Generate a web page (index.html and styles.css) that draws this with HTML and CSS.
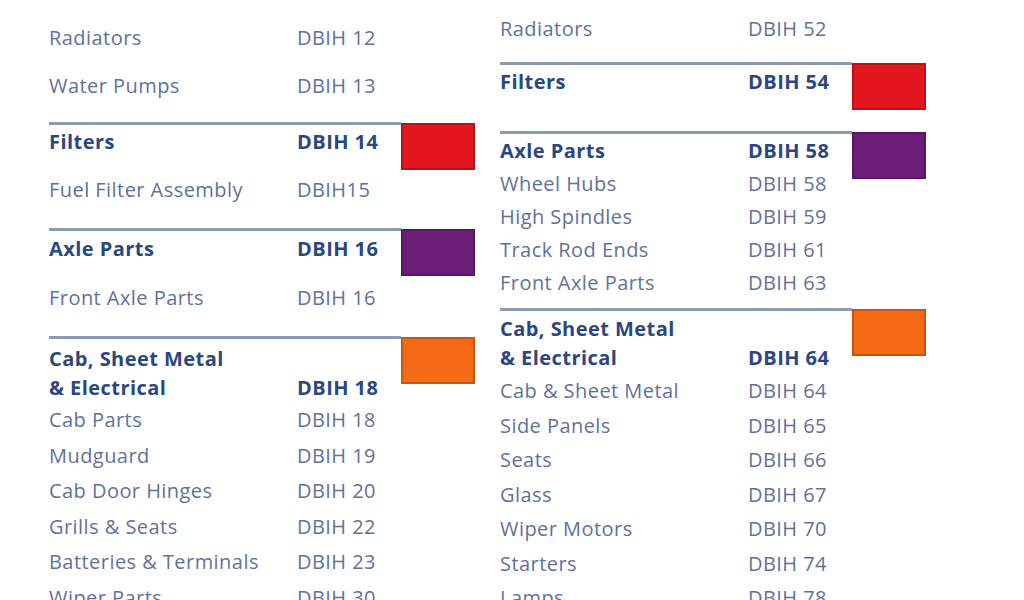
FILE: index.html
```html
<!DOCTYPE html>
<html>
<head>
<meta charset="utf-8">
<link rel="stylesheet" href="styles.css">
</head>
<body>
<div class="page">
  <div class="col col-left">
    <div class="row lead cut"><span class="name">Cooling Pipes</span><span class="code">DBIH 11</span></div>
    <div class="row lead"><span class="name">Radiators</span><span class="code">DBIH 12</span></div>
    <div class="row lead"><span class="name">Water Pumps</span><span class="code">DBIH 13</span></div>

    <div class="sec sec-l1">
      <div class="body">
        <div class="row head"><span class="name">Filters</span><span class="code">DBIH 14</span></div>
        <div class="row sub"><span class="name">Fuel Filter Assembly</span><span class="code">DBIH15</span></div>
      </div>
      <div class="swatch red"></div>
    </div>

    <div class="sec sec-l2">
      <div class="body">
        <div class="row head"><span class="name">Axle Parts</span><span class="code">DBIH 16</span></div>
        <div class="row sub sub2"><span class="name">Front Axle Parts</span><span class="code">DBIH 16</span></div>
      </div>
      <div class="swatch purple"></div>
    </div>

    <div class="sec sec-l3">
      <div class="body">
        <div class="head2">
          <div class="row head tall"><span class="name">Cab, Sheet Metal</span><span class="code"></span></div>
          <div class="row head tall"><span class="name">&amp; Electrical</span><span class="code">DBIH 18</span></div>
        </div>
        <div class="list list-l">
          <div class="row"><span class="name">Cab Parts</span><span class="code">DBIH 18</span></div>
          <div class="row"><span class="name">Mudguard</span><span class="code">DBIH 19</span></div>
          <div class="row"><span class="name">Cab Door Hinges</span><span class="code">DBIH 20</span></div>
          <div class="row"><span class="name">Grills &amp; Seats</span><span class="code">DBIH 22</span></div>
          <div class="row"><span class="name">Batteries &amp; Terminals</span><span class="code">DBIH 23</span></div>
          <div class="row"><span class="name">Wiper Parts</span><span class="code">DBIH 30</span></div>
        </div>
      </div>
      <div class="swatch orange"></div>
    </div>
  </div>

  <div class="col col-right">
    <div class="row lead"><span class="name">Cooling System</span><span class="code">DBIH 51</span></div>
    <div class="row lead"><span class="name">Radiators</span><span class="code">DBIH 52</span></div>

    <div class="sec sec-r1">
      <div class="body">
        <div class="row head"><span class="name">Filters</span><span class="code">DBIH 54</span></div>
      </div>
      <div class="swatch red"></div>
    </div>

    <div class="sec sec-r2">
      <div class="body">
        <div class="list list-r2">
          <div class="row head"><span class="name">Axle Parts</span><span class="code">DBIH 58</span></div>
          <div class="row"><span class="name">Wheel Hubs</span><span class="code">DBIH 58</span></div>
          <div class="row"><span class="name">High Spindles</span><span class="code">DBIH 59</span></div>
          <div class="row"><span class="name">Track Rod Ends</span><span class="code">DBIH 61</span></div>
          <div class="row"><span class="name">Front Axle Parts</span><span class="code">DBIH 63</span></div>
        </div>
      </div>
      <div class="swatch purple"></div>
    </div>

    <div class="sec sec-r3">
      <div class="body">
        <div class="head2 head2-r">
          <div class="row head tall"><span class="name">Cab, Sheet Metal</span><span class="code"></span></div>
          <div class="row head tall"><span class="name">&amp; Electrical</span><span class="code">DBIH 64</span></div>
        </div>
        <div class="list list-r3">
          <div class="row"><span class="name">Cab &amp; Sheet Metal</span><span class="code">DBIH 64</span></div>
          <div class="row"><span class="name">Side Panels</span><span class="code">DBIH 65</span></div>
          <div class="row"><span class="name">Seats</span><span class="code">DBIH 66</span></div>
          <div class="row"><span class="name">Glass</span><span class="code">DBIH 67</span></div>
          <div class="row"><span class="name">Wiper Motors</span><span class="code">DBIH 70</span></div>
          <div class="row"><span class="name">Starters</span><span class="code">DBIH 74</span></div>
          <div class="row"><span class="name">Lamps</span><span class="code">DBIH 78</span></div>
        </div>
      </div>
      <div class="swatch orange"></div>
    </div>
  </div>
</div>
</body>
</html>
```

FILE: styles.css
```css
html, body {
  margin: 0;
  padding: 0;
  background: #ffffff;
}

body {
  width: 1024px;
  height: 600px;
  overflow: hidden;
  font-family: "Open Sans", "Noto Sans", "Liberation Sans", sans-serif;
  font-size: 20px;
  letter-spacing: 0.45px;
  color: #62719b;
}

.page {
  display: flex;
  gap: 25px;
  padding-left: 49px;
}

.col {
  display: flex;
  flex-direction: column;
  width: 426px;
}

.col-left { margin-top: -44px; }
.col-right { margin-top: -45px; }

.row {
  display: flex;
  line-height: 34px;
  white-space: nowrap;
}

.name { width: 248px; flex: none; }
.code { flex: none; }

.lead { line-height: 48px; }
.col-left .cut { line-height: 58px; }
.col-right .lead:first-child { line-height: 50px; }

.head {
  font-weight: 700;
  color: #2b4781;
}

.sec {
  display: flex;
  align-items: flex-start;
}

.body {
  width: 352px;
  border-top: 3px solid #8c9ab3;
}

.swatch {
  width: 74px;
  height: 47px;
  box-sizing: border-box;
  border: 2px solid rgba(0, 0, 0, 0.18);
  margin-top: 1px;
}

.red { background: #e3151f; }
.purple { background: #6b1e78; }
.orange { background: #f46a15; }

/* left column spacing */
.sec-l1 { margin-top: 12px; }
.sec-l1 .sub { margin-top: 14px; }
.sec-l2 { margin-top: 21px; }
.sec-l2 .head { padding-top: 1px; }
.sec-l2 .sub2 { margin-top: 15px; }
.sec-l3 { margin-top: 21px; }

.head2 { padding-top: 5px; }
.head2-r { padding-top: 3px; }
.tall { line-height: 29px; }

.list-l .row { line-height: 35.6px; }

/* right column spacing */
.sec-r1 { margin-top: 9px; }
.sec-r2 { margin-top: 21px; }
.list-r2 .row { line-height: 33px; }
.sec-r3 { margin-top: 9px; }
.list-r3 { margin-top: 2px; }
.list-r3 .row { line-height: 34.5px; }
```
